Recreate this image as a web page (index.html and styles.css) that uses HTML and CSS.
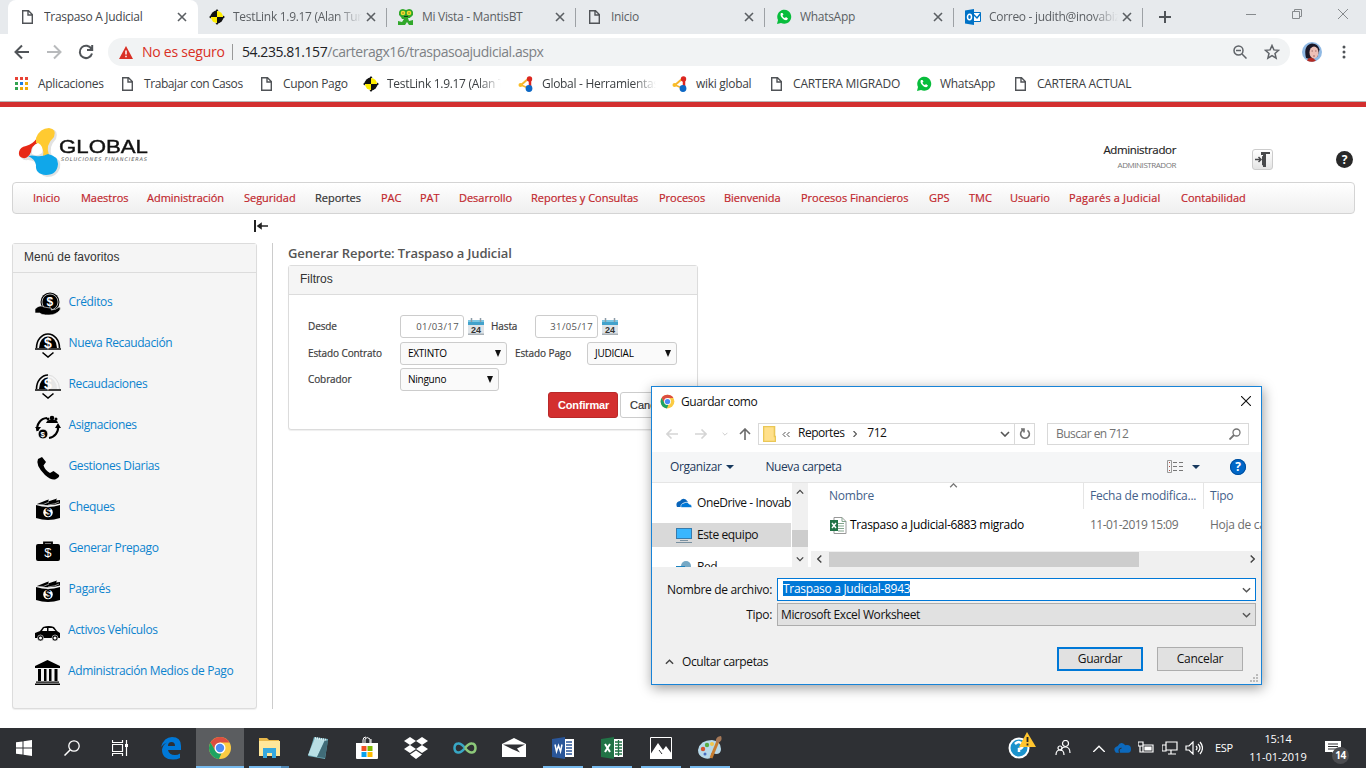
FILE: index.html
```html
<!DOCTYPE html>
<html lang="es">
<head>
<meta charset="utf-8">
<title>Traspaso A Judicial</title>
<link rel="stylesheet" href="styles.css">
</head>
<body>
<svg class="defs" aria-hidden="true">
  <symbol id="doc" viewBox="0 0 14 16"><path d="M2.7 1.7h5.8l3.8 3.8v8.8H2.7z M8 1.7v4.3h4.3" fill="none" stroke="#505357" stroke-width="1.4"/></symbol>
  <symbol id="x" viewBox="0 0 10 10"><path d="M1 1l8 8M9 1L1 9" stroke="#5b5f63" stroke-width="1.6"/></symbol>
  <symbol id="testlink" viewBox="0 0 16 16"><path d="M8 8V1.500A6.500 6.500 0 0 0 1.500 8z" fill="#111"/><path d="M8 8V2a6 6 0 0 1 6 6z" fill="#fe0"/><path d="M8 8v6a6 6 0 0 1-6-6z" fill="#fe0"/><path d="M8 8v6.500A6.500 6.500 0 0 0 14.500 8z" fill="#111"/><path d="M0 8l2-1.500v3zM16 8l-2-1.500v3zM8 0L6.500 2h3zM8 16l-1.500-2h3z" fill="#111"/></symbol>
  <symbol id="wa" viewBox="0 0 16 16"><path d="M1 15l1-4a7 7 0 1 1 3 3z" fill="#08bd3c"/><path d="M5 4c-2 3 3 8 6 7l1-1.5L10 8 9 9C8 9 6.500 7.500 6.500 6.500l1-1L6.500 4z" fill="#fff"/></symbol>
  <symbol id="global" viewBox="0 0 16 16"><path d="M10 3L3 9" stroke="#f6b42c" stroke-width="2"/><path d="M3 9l7 3" stroke="#f6b42c" stroke-width="1.500"/><circle cx="11.500" cy="3" r="2.700" fill="#dc2720"/><path d="M12 3v7" stroke="#dc2720" stroke-width="2.500"/><circle cx="2.500" cy="9" r="2" fill="#f9bd27"/><circle cx="11" cy="12.500" r="3.400" fill="#0d68c5"/></symbol>
  <symbol id="chrome" viewBox="0 0 24 24"><circle cx="12" cy="12" r="11" fill="#fbcb43"/><path d="M2.500 6.500A11 11 0 0 1 21.500 6.500H12L7.200 14.800z" fill="#dc4e41"/><path d="M2.500 6.500l4.800 8.300A5.500 5.500 0 0 0 13.500 17.300L11 23A11 11 0 0 1 2.500 6.500z" fill="#1ea362"/><circle cx="12" cy="12" r="5.500" fill="#fff"/><circle cx="12" cy="12" r="4.200" fill="#4c8bf5"/></symbol>
  <symbol id="cal" viewBox="0 0 16 18"><path d="M0 5h16v12H0z" fill="#dfe4e8"/><path d="M0 15.500h16V17H0z" fill="#a8b0b6"/><path d="M0 2h16v5H0z" fill="#42a2cc"/><path d="M0 2h16v2H0z" fill="#7dc7e3"/><path d="M3.500 0v4M12.500 0v4" stroke="#8b9ba6" stroke-width="1.500"/><text x="3" y="15" class="cal-num">24</text></symbol>
  <symbol id="cash" viewBox="0 0 26 26"><path d="M1 9q12 4 24 0v13q-12 4-24 0z"/><path d="M2 8l10-4 2-.5-1 2 9-3-1 2 4-.5v3.500q-8 3-23 1z"/><path d="M2 8.500q7 1 12-2.500M13 9q8-1 11-3" stroke="#f5f5f5" stroke-width=".6" fill="none"/><circle cx="13" cy="16.500" r="4.800" fill="#fff"/><text x="10.300" y="20.100" class="coin dark">$</text></symbol>
  <symbol id="down" viewBox="0 0 10 6"><path d="M1 1l4 4 4-4" fill="none" stroke="currentColor" stroke-width="1.600"/></symbol>
</svg>

<header class="tabs">
  <div class="tab active"><svg class="i-doc"><use href="#doc"/></svg><span>Traspaso A Judicial</span><svg class="i-x"><use href="#x"/></svg></div>
  <div class="tab"><svg class="i-fav"><use href="#testlink"/></svg><span class="fade">TestLink 1.9.17 (Alan Turing)</span><svg class="i-x"><use href="#x"/></svg></div>
  <div class="tab"><svg class="i-fav" viewBox="0 0 16 16"><path d="M2 6h12l-2 3h-2l1 3 4-1v5h-4l-2-3-2 3H0v-4l4 1 2-3H4z" fill="#31a82b"/><path d="M1 3q1-3 4-3l3 1 3-1q3 0 4 3v3l-2 2H3L1 6z" fill="#31a82b"/><circle cx="5" cy="4" r="2.300" fill="#f3db2f"/><circle cx="11" cy="4" r="2.300" fill="#f3db2f"/><path d="M4.500 4h1M10.500 4h1M6 7.500h4" stroke="#173d12"/></svg><span>Mi Vista - MantisBT</span><svg class="i-x"><use href="#x"/></svg></div>
  <div class="tab"><svg class="i-doc"><use href="#doc"/></svg><span>Inicio</span><svg class="i-x"><use href="#x"/></svg></div>
  <div class="tab"><svg class="i-fav"><use href="#wa"/></svg><span>WhatsApp</span><svg class="i-x"><use href="#x"/></svg></div>
  <div class="tab"><svg class="i-fav" viewBox="0 0 16 16"><path d="M7 3.500h8.500v9H7z" fill="#fff" stroke="#0072c6"/><path d="M8 5l4 4 4-5" fill="none" stroke="#0072c6" stroke-width="1.500"/><path d="M0 1.500L9 0v16l-9-1.500z" fill="#0072c6"/><ellipse cx="4.500" cy="8" rx="2" ry="2.700" fill="none" stroke="#fff" stroke-width="1.500"/></svg><span class="fade">Correo - judith@inovabiz</span><svg class="i-x"><use href="#x"/></svg></div>
  <svg class="i-plus" viewBox="0 0 12 12"><path d="M6 0v12M0 6h12" stroke="#505458" stroke-width="2"/></svg>
  <div class="win"><svg viewBox="0 0 10 10"><path d="M0 5.500h10"/></svg><svg viewBox="0 0 10 10"><path d="M.5 2.500h7v7h-7zM2.500 2.500v-2h7v7h-2"/></svg><svg viewBox="0 0 10 10"><path d="M0 0l10 10M10 0L0 10"/></svg></div>
</header>

<div class="toolbar">
  <div class="nav-btns">
    <svg viewBox="0 0 16 16"><path d="M15 8H2M8 1.500L1.500 8 8 14.500" stroke="#505458"/></svg>
    <svg viewBox="0 0 16 16"><path d="M1 8h13M8 1.500L14.500 8 8 14.500" stroke="#b8babc"/></svg>
    <svg viewBox="0 0 16 16"><path d="M13.500 5A6.200 6.200 0 1 0 14 9.500M14.200 1v5H9" stroke="#505458"/></svg>
  </div>
  <div class="omnibox">
    <svg class="i-warn" viewBox="0 0 14 13"><path d="M7 0l7 13H0z" fill="#d93025"/><path d="M7 4.500v4M7 9.800v1.500" stroke="#fff" stroke-width="1.500"/></svg>
    <span class="unsafe">No es seguro</span><i></i><span class="url"><b>54.235.81.157</b>/carteragx16/traspasoajudicial.aspx</span>
    <svg class="i-zoom" viewBox="0 0 14 14"><circle cx="5.500" cy="5.500" r="4.500"/><path d="M3 5.500h5M9 9l4.500 4.500"/></svg>
    <svg class="i-star" viewBox="0 0 16 16"><path d="M8 1.500l1.900 4.400 4.700.4-3.600 3.100 1.100 4.700L8 11.600l-4.100 2.500L5 9.400 1.400 6.300l4.700-.4z"/></svg>
  </div>
  <svg class="avatar" viewBox="0 0 20 20"><circle cx="10" cy="10" r="10" fill="#90b9e4"/><path d="M4 16Q1 3 10 1.500q6 0 7.500 6l-2 7-6 3z" fill="#1b1827"/><path d="M5 18.500q1-3 5-3l4 3-2 1q-4 1-7-1z" fill="#b52b22"/><ellipse cx="12" cy="10.500" rx="4.500" ry="6" fill="#eec0b6"/><path d="M9.500 9h1.500M13 9h1.500M11 14h2" stroke="#8d5557" stroke-width=".8"/></svg>
  <svg class="dots" viewBox="0 0 4 14"><circle cx="2" cy="2" r="1.500"/><circle cx="2" cy="7" r="1.500"/><circle cx="2" cy="12" r="1.500"/></svg>
</div>

<div class="bookmarks">
  <span><svg class="i-apps" viewBox="0 0 13 13"><path d="M0 0h3v3H0zM5 0h3v3H5zM10 0h3v3h-3z" fill="#e84235"/><path d="M0 5h3v3H0zM0 10h3v3H0z" fill="#32a350"/><path d="M5 5h3v3H5z" fill="#1b7ee6"/><path d="M10 5h3v3h-3zM5 10h3v3H5zM10 10h3v3h-3z" fill="#efab09"/></svg><em>Aplicaciones</em></span>
  <span><svg class="i-doc"><use href="#doc"/></svg><em class="tight">Trabajar con Casos</em></span>
  <span><svg class="i-doc"><use href="#doc"/></svg><em>Cupon Pago</em></span>
  <span><svg class="i-fav"><use href="#testlink"/></svg><em class="fade">TestLink 1.9.17 (Alan Turing)</em></span>
  <span><svg class="i-fav"><use href="#global"/></svg><em class="fade">Global - Herramientas</em></span>
  <span><svg class="i-fav"><use href="#global"/></svg><em>wiki global</em></span>
  <span><svg class="i-doc"><use href="#doc"/></svg><em class="loose">CARTERA MIGRADO</em></span>
  <span><svg class="i-fav"><use href="#wa"/></svg><em>WhatsApp</em></span>
  <span><svg class="i-doc"><use href="#doc"/></svg><em>CARTERA ACTUAL</em></span>
</div>

<main class="page">
  <div class="brand">
    <svg class="logo" viewBox="0 0 44 50"><path d="M22 10Q24 2 33 1q8 1 5 10-8 8-4 17 10 3 8 12-3 9-13 9-9-2-9-11-3-6-10-6-8 1-7-6z" fill="#e2e2e2"/><path d="M19 10l1 5Q13 18 13 24 10 31 5 30 0 29 1 24q1-5 7-6 7-2 11-8z" fill="#e72816"/><path d="M18 10Q22 0 31 0q8 1 5 9-9 8-5 18l-6 1q2-9-7-13z" fill="#ffca31"/><path d="M10 28q4-1 8 0 6 1 12-2 10 2 10 10-1 11-12 11-11-1-10-10-1-6-8-9z" fill="#10a7ea"/><path d="M20 15q6 3 4 10-5 4-10 1-1-8 6-11z" fill="#fff"/></svg>
    <div class="brand-text"><strong>GLOBAL</strong><small>SOLUCIONES FINANCIERAS</small></div>
    <div class="user"><b>Administrador</b><small>ADMINISTRADOR</small></div>
    <div class="exit"><svg viewBox="0 0 17 17"><path d="M7 1h9v2h-4v13H9V4H7z" fill="#48494b"/><path d="M8 5l4 1v10l-4-2z" fill="#48494b"/><path d="M1 8.500h6M4.500 6L7 8.500 4.500 11" fill="none" stroke="#48494b" stroke-width="1.500"/></svg></div>
    <div class="help">?</div>
  </div>

  <nav class="menu"><a>Inicio</a><a>Maestros</a><a>Administración</a><a>Seguridad</a><a class="on">Reportes</a><a>PAC</a><a>PAT</a><a>Desarrollo</a><a>Reportes y Consultas</a><a>Procesos</a><a>Bienvenida</a><a>Procesos Financieros</a><a>GPS</a><a>TMC</a><a>Usuario</a><a class="wide">Pagarés a Judicial</a><a>Contabilidad</a></nav>

  <div class="collapse"><svg viewBox="0 0 14 12"><path d="M1 0v12" stroke="#222" stroke-width="2"/><path d="M4 6h10M7 3.800v4.400L4 6z" stroke="#222" stroke-width="1.600" fill="#222"/></svg></div>

  <div class="columns">
    <aside class="favs">
      <h2>Menú de favoritos</h2>
      <ul>
        <li><svg viewBox="0 0 26 26"><circle cx="15" cy="11" r="9.500"/><circle cx="15" cy="11" r="8" fill="none" stroke="#fff" stroke-width=".700"/><text x="11.500" y="15" class="coin">$</text><path d="M0 18q5-5 9-2l6 1q3 0 1 2 5 0 8-3 2 0 1 3-4 5-11 5-8 0-9-2H0z" stroke="#f5f5f5" stroke-width=".600"/></svg><a>Créditos</a></li>
        <li><svg viewBox="0 0 26 26"><path d="M1.500 16a11.500 14 0 0 1 23 0" fill="none" stroke="#000" stroke-width="1.600"/><path d="M4 16a9 11.500 0 0 1 18 0z"/><path d="M0 17h26M7.500 20.500l5.500 4.500 5.500-4.500" fill="none" stroke="#000" stroke-width="1.600"/><text x="9" y="15.500" class="coin big">$</text></svg><a>Nueva Recaudación</a></li>
        <li><svg viewBox="0 0 26 26"><path d="M13 2a12 14 0 0 1 11.500 14" fill="none" stroke="#ddd"/><path d="M13 4.500a9 11 0 0 1 9 11.500h-9z" fill="#e6e6e6"/><path d="M1.500 16A11.500 14 0 0 1 13 2" fill="none" stroke="#000" stroke-width="1.600"/><path d="M4 16a9 11.500 0 0 1 9-11.500V16z"/><path d="M0 17h26M7.500 20.500l5.500 4.500 5.500-4.500" fill="none" stroke="#000" stroke-width="1.600"/><text x="9" y="15.500" class="coin big">$</text></svg><a>Recaudaciones</a></li>
        <li><svg viewBox="0 0 26 26"><path d="M2.500 17A10.500 10.500 0 0 1 12 4M23 12a10.500 10.500 0 0 1-9 12" fill="none" stroke="#000" stroke-width="2.200"/><path d="M0 13l3 4 3-4zM20 14l3-5 3 5zM11 9q2-4 6-3 5-1 6 3z"/><circle cx="17" cy="4" r="2.300"/><circle cx="13" cy="5" r="1.500"/><circle cx="21" cy="5" r="1.500"/><circle cx="8" cy="20" r="5" stroke="#f5f5f5"/><text x="5.600" y="23.300" class="coin small">$</text></svg><a>Asignaciones</a></li>
        <li><svg viewBox="0 0 26 26"><path d="M3 4l4-2 4 5-2.500 3.500Q10 15 15 18l3.500-2L24 20q1 2-3 4-4 2-11-4Q0 10 3 4z"/></svg><a>Gestiones Diarias</a></li>
        <li><svg viewBox="0 0 26 26"><use href="#cash"/></svg><a>Cheques</a></li>
        <li><svg viewBox="0 0 26 26"><rect x="1" y="7" width="24" height="17" rx="2"/><path d="M9 7V5.500h8V7" fill="none" stroke="#000" stroke-width="1.800"/><text x="9.300" y="20" class="coin thin">$</text></svg><a>Generar Prepago</a></li>
        <li><svg viewBox="0 0 26 26"><use href="#cash"/></svg><a>Pagarés</a></li>
        <li class="l2"><svg viewBox="0 0 26 26"><path d="M0 19v-5l5-2 3-4q6-2 11 0l3 4 3 2v5z"/><path d="M7 12l2-3h3v3zM13.500 12V9h4l3 3z" fill="#f5f5f5"/><circle cx="5.500" cy="19" r="3" stroke="#f5f5f5" stroke-width=".6"/><circle cx="20" cy="19" r="3" stroke="#f5f5f5" stroke-width=".6"/><circle cx="5.500" cy="19" r="1.500" fill="#fff"/><circle cx="20" cy="19" r="1.500" fill="#fff"/></svg><a>Activos Vehículos</a></li>
        <li class="l2"><svg viewBox="0 0 26 26"><path d="M0 6l12.500-6L25 6v2H0zM3 9h3v12H3zM9 9h2.500v12H9zM14 9h2.500v12H14zM19.500 9h3v12h-3zM1 21.500h23v1.200H1zM0 23.500h25V25H0z"/></svg><a>Administración Medios de Pago</a></li>
      </ul>
    </aside>
    <section class="report">
      <h1>Generar Reporte: Traspaso a Judicial</h1>
      <div class="panel">
        <h2>Filtros</h2>
        <div class="filters">
          <div class="row r1"><label>Desde</label><span class="input">01/03/17</span><svg><use href="#cal"/></svg><label>Hasta</label><span class="input">31/05/17</span><svg><use href="#cal"/></svg></div>
          <div class="row r2"><label>Estado Contrato</label><span class="select">EXTINTO<i></i></span><label>Estado Pago</label><span class="select">JUDICIAL<i></i></span></div>
          <div class="row r3"><label>Cobrador</label><span class="select">Ninguno<i></i></span></div>
          <div class="actions"><span class="btn primary">Confirmar</span><span class="btn">Cancelar</span></div>
        </div>
      </div>
    </section>
  </div>
</main>

<footer class="taskbar">
  <div class="apps">
    <div class="app sys"><svg class="s16" viewBox="0 0 16 16"><path d="M0 2.300L6.500 1.400V7.500H0zM7.500 1.200L16 0v7.500H7.500zM0 8.500h6.500v6.100L0 13.700zM7.500 8.500H16V16l-8.500-1.200z" fill="#fff"/></svg></div>
    <div class="app sys"><svg class="s16" viewBox="0 0 16 16"><circle cx="10" cy="6" r="5.200" fill="none" stroke="#fff" stroke-width="1.300"/><path d="M6.300 9.700L.500 15.500" stroke="#fff" stroke-width="1.500"/></svg></div>
    <div class="app sys"><svg class="s16" viewBox="0 0 16 16"><path d="M.5 0v2.500h10V0M.5 16v-2.500h10V16M.5 4.500h10v7H.5zM14.500 0v16" fill="none" stroke="#fff" stroke-width="1.200"/><path d="M13 4h3v3h-3z" fill="#fff"/></svg></div>
    <div class="app"><svg viewBox="0 0 24 24"><path d="M2 11Q5 1 13 1q9 0 9 9v4H9q1 5 7 5 3 0 5-1.500V22q-3 1.500-7 1.500-11 0-11-10 1-5 5-7Q5 7 2 11zm7-1h7q0-4-3.500-4T9 10z" fill="#0078d7"/></svg></div>
    <div class="app current"><svg><use href="#chrome"/></svg></div>
    <div class="app open group"><svg viewBox="0 0 24 24"><path d="M2 2h8l2 2h10v16H2z" fill="#e8b84b"/><path d="M2 5h21v15H2z" fill="#ffe79a"/><path d="M6 12h13v10h-4v-5h-5v5H6z" fill="#35a8df"/></svg></div>
    <div class="app"><svg viewBox="0 0 24 24"><path d="M8 1l14 2-3 20-17-3z" fill="#6cabb9"/><path d="M9 2l10 2-8 17-9-2z" fill="#b8dfe5"/><path d="M19 4l3 1-3 17-8-1z" fill="#416c78"/><path d="M9 2l12 2" stroke="#e6f3f4" stroke-width="2" stroke-dasharray="1 1"/></svg></div>
    <div class="app"><svg viewBox="0 0 24 24"><path d="M1 7h22v15q0 1-1 1H2q-1 0-1-1z" fill="#fff"/><path d="M8 7V4q0-3 3-3M10 7V3q2-3 5 0v4M16 7V3" fill="none" stroke="#fff"/><path d="M6.500 10h5v5h-5z" fill="#f04f23"/><path d="M12.500 10h5v5h-5z" fill="#7db801"/><path d="M6.500 16h5v5h-5z" fill="#0aa2ec"/><path d="M12.500 16h5v5h-5z" fill="#fdb900"/></svg></div>
    <div class="app"><svg viewBox="0 0 24 24"><path d="M6 1L0 5l6 4 6-4zm12 0l-6 4 6 4 6-4zM0 13l6 4 6-4-6-4zm18-4l-6 4 6 4 6-4zM6 18.500l6-4 6 4-6 4.500z" fill="#fff"/></svg></div>
    <div class="app"><svg viewBox="0 0 24 24"><path d="M12 12Q8 7 5 7.500q-3.500.5-3.500 4.500T5 16.500Q8 17 12 12" fill="none" stroke="#38a7c5" stroke-width="2.500"/><path d="M12 12q4-5 7-4.500 3.500.5 3.500 4.500T19 16.500q-3 .5-7-4.500" fill="none" stroke="#8dc97a" stroke-width="2.500"/></svg></div>
    <div class="app"><svg viewBox="0 0 24 24"><path d="M0 8l12-6 12 6v13H0z" fill="#fff"/><path d="M1 8.500h22l-8 4 3 4-7-3z" fill="#2f3034"/></svg></div>
    <div class="app open"><svg viewBox="0 0 24 24"><path d="M12 3h11v18H12z" fill="#fff"/><path d="M15 6h6M15 9h6M15 12h6M15 15h6M15 18h6" stroke="#2a5699" stroke-width="1.300"/><path d="M1 3l13-2v22L1 21z" fill="#2a5699"/><path d="M4 8.500l1.500 7 2-6 2 6 1.500-7" fill="none" stroke="#fff" stroke-width="1.500"/></svg></div>
    <div class="app open"><svg viewBox="0 0 24 24"><path d="M12 3h11v18H12z" fill="#fff"/><path d="M15 6h7M15 9h7M15 12h7M15 15h7M15 18h7M18.500 4v16" stroke="#217346" stroke-width="1.300"/><path d="M1 3l13-2v22L1 21z" fill="#217346"/><path d="M5 8l5 8M10 8l-5 8" stroke="#fff" stroke-width="2"/></svg></div>
    <div class="app open"><svg viewBox="0 0 24 24"><path d="M1.500 1.500h21v21h-21z" fill="#2b2c30" stroke="#fff"/><path d="M1 19L9 7l5 7 3-4 6 8v5H1z" fill="#fff"/><path d="M10 14l3 4" stroke="#2b2c30"/></svg></div>
    <div class="app open"><svg viewBox="0 0 24 24"><path d="M0 14Q2 4 14 4q9 1 9 9 0 5-5 5l-4-1q-2 1 0 4-3 3-8 1-6-2-6-8z" fill="#b7d9ea"/><circle cx="5" cy="13" r="2.200" fill="#d7522d"/><circle cx="9" cy="9" r="2.200" fill="#58ac45"/><circle cx="14" cy="8" r="2" fill="#f0c64b"/><circle cx="7" cy="18" r="1.500" fill="#496fc1"/><path d="M13 22l7-17" stroke="#c77d30" stroke-width="3"/><path d="M18 6q-1-5 5-6 2 5-3 7z" fill="#a67857"/></svg></div>
  </div>
  <div class="tray">
    <svg class="t-alert" viewBox="0 0 28 28"><circle cx="11" cy="16" r="10.500" fill="#fff"/><circle cx="11" cy="16" r="8.500" fill="#1c93cc"/><path d="M7 12q4-4 7 0 2 4-3 5v3" fill="none" stroke="#fff" stroke-width="2.500"/><path d="M19 0l9 15H11z" fill="#ffc52e"/><path d="M19.500 5v5M19.500 11.500v2" stroke="#222" stroke-width="1.800"/></svg>
    <svg class="t-people" viewBox="0 0 16 16"><circle cx="10.500" cy="3.500" r="3"/><path d="M6 11q0-4 4.500-4t4.500 6M1 15q0-5 4-5t4 5"/><circle cx="5" cy="8" r="2"/></svg>
    <svg class="t-up" viewBox="0 0 10 6"><path d="M0 6l5-5 5 5"/></svg>
    <svg class="t-cloud" viewBox="0 0 18 12"><path d="M2 11q-4-5 2-7 3-6 8-1 6-1 6 4 0 4-3 4z" fill="#0c69bd"/><path d="M6 11q-2-4 2-5" stroke="#2e3034" fill="none"/></svg>
    <svg class="t-bat" viewBox="0 0 16 14"><path d="M5 4h10v7H5zM0 1h5v4H0zM2 5v6h3"/><path d="M7 6h6v3H7z" fill="#fff"/></svg>
    <svg class="t-net" viewBox="0 0 16 14"><path d="M4 1h11v8H4zM9 9v4M6 13h8M0 4h4v6H0z"/></svg>
    <svg class="t-vol" viewBox="0 0 18 14"><path d="M1 5h3l4-4v12L4 9H1zM11 5q2 2 0 4M13 3q4 4 0 8M15 1q5 6 0 12"/></svg>
    <span class="lang">ESP</span>
    <span class="clock"><span>15:14</span><span>11-01-2019</span></span>
    <div class="notice"><svg viewBox="0 0 16 16"><path d="M0 1h16v11h-5v4l-4-4H0z" fill="#fff"/><path d="M3 4h10M3 6.500h10M3 9h10" stroke="#2e2f32"/></svg><b>14</b></div>
  </div>
</footer>

<div class="dialog">
  <div class="d-title"><svg class="i-chrome"><use href="#chrome"/></svg><span>Guardar como</span><svg class="d-close" viewBox="0 0 10 10"><path d="M0 0l10 10M10 0L0 10" stroke="#111" stroke-width="1.100"/></svg></div>
  <div class="d-nav">
    <svg class="ar" viewBox="0 0 12 10"><path d="M12 5H1M5.500 .5L1 5l4.500 4.500" stroke="#d5d5d5"/></svg>
    <svg class="ar" viewBox="0 0 12 10"><path d="M0 5h11M6.500 .5L11 5 6.500 9.500" stroke="#d5d5d5"/></svg>
    <svg class="tiny"><use href="#down"/></svg>
    <svg class="up" viewBox="0 0 12 12"><path d="M6 12V1M1 6l5-5 5 5" stroke="#6a6a6a"/></svg>
    <div class="address"><svg class="folder" viewBox="0 0 13 16"><path d="M0 0h12v10h1v6H0z" fill="#ffe08b"/><path d="M.5 .5h11v10h1v5H.5z" fill="none" stroke="#eac756"/></svg><svg class="laq" viewBox="0 0 8 5"><path d="M3.500 0L1 2.500 3.500 5M7.500 0L5 2.500 7.500 5"/></svg><span>Reportes</span><svg class="raq" viewBox="0 0 4 6"><path d="M.5 0l3 3-3 3"/></svg><span>712</span><svg class="chev"><use href="#down"/></svg><div class="refresh"><svg viewBox="0 0 12 12"><path d="M4 2A4.400 4.400 0 1 0 8.500 2.300M2 1h3v3.500" fill="none" stroke="#707070" stroke-width="1.600"/></svg></div></div>
    <div class="search"><span>Buscar en 712</span><svg viewBox="0 0 12 12"><circle cx="7.500" cy="4.500" r="3.500" fill="none" stroke="#737373" stroke-width="1.300"/><path d="M5 7L.5 11.500" stroke="#737373" stroke-width="1.800"/></svg></div>
  </div>
  <div class="d-tools"><span>Organizar</span><i class="tri"></i><span class="new">Nueva carpeta</span><svg class="views" viewBox="0 0 16 13"><path d="M.5 .5h4v12h-4z" fill="none" stroke="#999"/><path d="M2 2.500h1M2 6.500h1M2 10.500h1" stroke="#b24d40"/><path d="M6 2.500h4M12 2.500h4M6 6.500h4M12 6.500h4M6 10.500h4M12 10.500h4" stroke="#777"/></svg><i class="tri"></i><b class="d-help">?</b></div>
  <div class="d-body">
    <div class="tree">
      <div><svg class="t16" viewBox="0 0 16 10"><path d="M1 9q-2-5 3-6 4-5 8 1l-5 1-2 4z" fill="#0864ba"/><path d="M5 9.500Q4 6 8 5q4-2 5 1 3 0 3 3.500z" fill="#0078d7" stroke="#fff" stroke-width=".6"/></svg><span>OneDrive - Inovabiz</span></div>
      <div class="sel"><svg class="t16 pc" viewBox="0 0 16 15"><path d="M0 0h16v11H0z" fill="#377bac"/><path d="M1 1h14v9H1z" fill="#38b6ff"/><path d="M4 12.500h8M0 14.500h16" stroke="#7990a0"/></svg><span>Este equipo</span></div>
      <div class="net"><svg class="t16" viewBox="0 0 16 12"><circle cx="10" cy="5" r="5" fill="#75a8c5"/><path d="M0 5h9v6H0z" fill="#1b82bf"/></svg><span>Red</span></div>
    </div>
    <div class="vscroll"><svg class="flip"><use href="#down"/></svg><i></i><svg><use href="#down"/></svg></div>
    <div class="files">
      <svg class="sort"><use href="#down"/></svg>
      <div class="f-head"><span>Nombre</span><span>Fecha de modifica...</span><span>Tipo</span></div>
      <div class="f-row"><svg viewBox="0 0 17 17"><path d="M4 .5h8l4 4v12H4z" fill="#fff" stroke="#999"/><path d="M12 .5v4h4M8 6.500h6M8 9h6M8 11.500h6M8 14h6" fill="none" stroke="#83a58c"/><path d="M0 3h8v11H0z" fill="#217346"/><path d="M2 6l4 5M6 6l-4 5" stroke="#fff" stroke-width="1.400"/></svg><span>Traspaso a Judicial-6883 migrado</span><span>11-01-2019 15:09</span><span>Hoja de cálculo</span></div>
      <div class="hscroll"><svg class="left"><use href="#down"/></svg><i></i><svg class="right"><use href="#down"/></svg></div>
    </div>
  </div>
  <div class="d-fields">
    <label>Nombre de archivo:</label><div class="combo focus"><mark>Traspaso a Judicial-8943</mark><svg><use href="#down"/></svg></div>
    <label>Tipo:</label><div class="combo"><span>Microsoft Excel Worksheet</span><svg><use href="#down"/></svg></div>
  </div>
  <div class="d-foot"><svg class="flip"><use href="#down"/></svg><span>Ocultar carpetas</span><b class="save">Guardar</b><b>Cancelar</b></div>
  <svg class="grip" viewBox="0 0 8 8"><path d="M6 0h2v2H6zM3 3h2v2H3zM6 3h2v2H6zM0 6h2v2H0zM3 6h2v2H3zM6 6h2v2H6z" fill="#bbb"/></svg>
</div>
</body>
</html>
```
FILE: styles.css
```css
* { box-sizing: border-box; }
body { margin: 0; width: 1366px; height: 768px; overflow: hidden; display: flex; flex-direction: column; position: relative; background: #fff; font: 12px/16px "Open Sans", sans-serif; letter-spacing: -.3px; color: #222; white-space: nowrap; }
.defs { position: absolute; width: 0; height: 0; }
svg { flex: none; display: block; }
h1, h2, ul { margin: 0; padding: 0; }
em, i { font-style: normal; }

/* Browser tabs */
.tabs { flex: none; height: 34px; background: #e7eaed; display: flex; padding-left: 8px; color: #5b5f63; }
.tab { width: 189px; height: 34px; display: flex; align-items: center; padding: 0 11px; background: linear-gradient(#9da1a5, #9da1a5) right 8px / 1px 19px no-repeat; }
.tab.active { width: 190px; padding-left: 12px; background: #fff; border-radius: 8px 8px 0 0; color: #44474b; }
.tab.active + .tab { background: none; }
.tab.active + .tab { background: linear-gradient(#9da1a5, #9da1a5) right 8px / 1px 19px no-repeat; }
.tab span { flex: 1; margin-left: 8px; overflow: hidden; }
.i-doc { width: 14px; height: 16px; }
.tab .i-doc { margin-right: 2px; }
.i-fav { width: 16px; height: 16px; }
.i-x { width: 10px; height: 10px; margin-left: 4px; }
.fade { overflow: hidden; -webkit-mask: linear-gradient(90deg, #000 80%, transparent); mask: linear-gradient(90deg, #000 80%, transparent); }
.i-plus { width: 12px; height: 12px; margin: 11px 0 0 16px; }
.win { display: flex; gap: 36px; margin: 9px 0 0 75px; }
.win svg { width: 10px; height: 10px; fill: none; stroke: #868a8d; }

/* Address bar */
.toolbar { flex: none; height: 36px; display: flex; align-items: center; padding-left: 14px; }
.nav-btns { display: flex; gap: 16px; width: 94px; }
.nav-btns svg { width: 16px; height: 16px; fill: none; stroke-width: 2; }
.omnibox { width: 1182px; height: 28px; background: #f1f3f4; border-radius: 14px; display: flex; align-items: center; padding-left: 11px; font-size: 14px; letter-spacing: -.25px; }
.i-warn { width: 14px; height: 13px; }
.unsafe { width: 90px; margin-left: 9px; color: #d93025; }
.omnibox i { width: 1px; height: 16px; background: #999; }
.url { margin-left: 9px; width: 991px; color: #7d8185; letter-spacing: -.45px; }
.url b { font-weight: 400; color: #202124; }
.i-zoom { width: 14px; height: 14px; fill: none; stroke: #5f6368; stroke-width: 1.500; }
.i-star { width: 16px; height: 16px; margin-left: 17px; fill: none; stroke: #5f6368; stroke-width: 1.500; }
.avatar { width: 20px; height: 20px; margin-left: 12px; }
.dots { width: 4px; height: 14px; margin-left: 20px; fill: #505458; }

/* Bookmarks */
.bookmarks { flex: none; height: 32px; display: grid; grid-template-columns: 106px 139px 103px 155px 154px 98px 146px 98px 140px; padding: 0 0 4px 15px; border-bottom: 1px solid #b8b8b8; color: #3c4043; }
.bookmarks span { display: flex; align-items: center; }
.bookmarks em { margin-left: 8px; max-width: 114px; }
.bookmarks .i-doc { margin-left: -1px; }
.bookmarks .i-doc + em { margin-left: 10px; }
.bookmarks .tight { letter-spacing: -.42px; }
.bookmarks .loose { letter-spacing: -.18px; }
.i-apps { width: 13px; height: 13px; }
.bookmarks .i-apps + em { margin-left: 10px; }

/* Application page */
.page { flex: 1; border-top: 5px solid #d32f2f; padding: 0 11px 0 12px; }
.brand { height: 75px; display: flex; padding-left: 6px; }
.logo { width: 44px; height: 50px; margin-top: 21px; }
.brand-text { margin: 31px 0 0 -3px; width: 1024px; }
.brand-text strong { display: block; font: 400 19px/17px "Liberation Sans", sans-serif; letter-spacing: 0; color: #111; transform: scaleX(1.170); transform-origin: left; -webkit-text-stroke: .4px #111; }
.brand-text small { display: block; font: italic 5px/6px "DejaVu Sans", sans-serif; letter-spacing: .88px; color: #555; padding-left: 2px; margin-top: 1px; }
.user { width: 93px; margin-top: 34px; text-align: right; line-height: 18px; }
.user b { display: block; font-weight: 400; font-size: 11.500px; letter-spacing: -.35px; -webkit-text-stroke: .15px; }
.user small { display: block; font-size: 8px; line-height: 12px; color: #777; letter-spacing: -.45px; }
.exit { width: 21px; height: 21px; margin: 42px 0 0 76px; border: 1px solid #ccc; border-radius: 3px; background: linear-gradient(#fff, #e4e4e4); padding: 1px; }
.exit svg { width: 17px; height: 17px; }
.help { width: 17px; height: 17px; margin: 44px 0 0 63px; border-radius: 50%; background: #292929; color: #fff; text-align: center; font: bold 12px/17px "Open Sans", sans-serif; }
.menu { height: 32px; border: 1px solid #d4d4d4; border-radius: 4px; background: linear-gradient(#fff, #efefef); display: grid; grid-template-columns: 48px 66px 97px 71px 66px 39px 39px 72px 128px 65px 77px 128px 40px 41px 59px 112px auto; padding-left: 20px; color: #c1272d; font-size: 11px; line-height: 30px; letter-spacing: -.02px; -webkit-text-stroke: .2px; }
.menu .on { color: #333; }
.menu .wide { letter-spacing: .15px; }
.collapse { height: 29px; padding: 6px 0 0 242px; }
.collapse svg { width: 14px; height: 12px; }
.columns { display: flex; }
.favs { width: 245px; height: 466px; border: 1px solid #dcdcdc; border-radius: 3px; background: #f5f5f5; box-shadow: 0 1px 1px #0001; }
.favs h2, .panel h2 { font: 400 12px/27px "Liberation Sans", sans-serif; letter-spacing: 0; height: 29px; padding-left: 11px; color: #333; border-bottom: 1px solid #dcdcdc; background: #f5f5f5; }
.favs ul { list-style: none; padding: 17px 0 0 22px; }
.favs li { height: 41px; display: flex; }
.favs li svg { width: 26px; height: 26px; margin-top: 1px; }
.favs a { color: #0c83ce; margin-left: 7.500px; line-height: 24px; letter-spacing: -.38px; }
.favs .l2 a { margin-left: 7px; }
.coin { fill: #fff; font: bold 12px "Liberation Sans", sans-serif; }
.coin.dark { fill: #000; font-size: 10px; }
.coin.big { font-size: 14px; }
.coin.small { font-size: 8px; }
.coin.thin { font-weight: 400; font-size: 13px; }
.cal-num { font: bold 9px "Liberation Sans", sans-serif; fill: #333; letter-spacing: 0; }
.report { width: 426px; height: 466px; margin-left: 15px; padding-left: 15px; border-left: 1px solid #ccc; }
.report h1 { font: 600 13px/21px "Open Sans", sans-serif; letter-spacing: -.12px; height: 22px; color: #555; }
.panel { width: 410px; height: 165px; border: 1px solid #dcdcdc; border-radius: 3px; background: #fff; box-shadow: 0 1px 1px #0001; }
.filters { padding: 18px 0 0 19px; font-size: 10px; line-height: 23px; color: #3d3d3d; letter-spacing: -.1px; }
.row { display: grid; align-items: center; height: 26px; }
.r1 { grid-template-columns: 92px 68px 23px 44px 67px 16px; height: 27px; }
.r2 { grid-template-columns: 92px 115px 72px 90px; }
.r3 { grid-template-columns: 92px 99px; height: 27px; }
.row label { -webkit-text-stroke: .2px; }
.row svg { width: 16px; height: 18px; }
.input { width: 64px; height: 23px; border: 1px solid #ccc; border-radius: 3px; text-align: right; padding-right: 4px; line-height: 21px; color: #555; font-size: 9.500px; letter-spacing: .4px; }
.input + svg + label + .input { width: 63px; }
.select { height: 23px; border: 1px solid #ccc; border-radius: 3px; background: #fafafa; color: #000; padding: 0 5px 0 7px; line-height: 21px; display: flex; justify-content: space-between; align-items: center; letter-spacing: -.25px; }
.r2 .select:nth-child(2) { width: 107px; }
.select i { border: 3.500px solid transparent; border-top: 7px solid #111; border-bottom: 0; }
.actions { display: flex; gap: 2px; padding: 0 0 0 240px; margin-top: -1px; }
.btn { width: 70px; height: 26px; border: 1px solid #ccc; border-radius: 3px; font: 11px/24px "Liberation Sans", sans-serif; letter-spacing: 0; padding-left: 9px; color: #333; -webkit-text-stroke: .2px; }
.primary { background: #d32f2f; border-color: #b92929; color: #fff; font-weight: 700; font-size: 11px; letter-spacing: -.15px; -webkit-text-stroke: 0; }

/* Save dialog */
.dialog { position: absolute; left: 651px; top: 386px; width: 611px; height: 299px; border: 1px solid #1883d7; background: #fff; box-shadow: 1px 3px 12px #0006; display: flex; flex-direction: column; overflow: hidden; color: #111; letter-spacing: -.3px; }
.d-title { height: 32px; display: flex; align-items: center; padding: 0 10px 2px 8px; letter-spacing: -.38px; }
.i-chrome { width: 15px; height: 15px; margin-right: 6px; margin-top: -2px; }
.d-close { width: 10px; height: 10px; margin-left: auto; margin-top: -2px; }
.d-nav { height: 33px; display: flex; align-items: center; padding: 0 12px 4px 14px; }
.d-nav svg { fill: none; stroke-width: 1.600; }
.ar { width: 12px; height: 10px; margin-right: 17px; }
.tiny { width: 6px; height: 4px; color: #ccc; margin: 0 12px 0 -2px; }
.up { width: 12px; height: 12px; margin-right: 7px; margin-left: -1px; }
.address { width: 277px; height: 22px; border: 1px solid #d9d9d9; display: flex; align-items: center; padding-left: 4px; letter-spacing: -.5px; }
.address span { line-height: 17px; margin-top: -2px; }
.folder { width: 13px; height: 16px; }
.laq { width: 8px; height: 5px; margin: 2px 8px 0 6px; stroke: #555; stroke-width: 1 !important; }
.raq { width: 4px; height: 6px; margin: 0 10px 0 9px; stroke: #555; stroke-width: 1.200 !important; }
.chev { width: 10px; height: 6px; color: #555; margin-left: auto; margin-right: 4px; }
.refresh { width: 20px; height: 20px; border-left: 1px solid #d9d9d9; padding: 4px; }
.refresh svg { width: 12px; height: 12px; }
.search { width: 202px; height: 22px; border: 1px solid #d9d9d9; margin-left: 12px; display: flex; align-items: center; justify-content: space-between; padding: 0 7px 0 8px; color: #737373; letter-spacing: -.52px; }
.search svg { width: 12px; height: 12px; }
.d-tools { height: 31px; background: #f5f6f7; border-bottom: 1px solid #e5e5e5; display: flex; align-items: center; padding: 0 15px 1px 18px; color: #1e3a5c; letter-spacing: -.4px; }
.tri { border: 4px solid transparent; border-top: 4px solid #17395e; border-bottom: 0; margin-left: 5px; }
.new { margin-left: 31px; }
.views { width: 16px; height: 13px; margin-left: auto; }
.views + .tri { margin-left: 9px; }
.d-help { width: 16px; height: 16px; margin-left: 30px; border-radius: 50%; background: #0067c8; outline: 1px solid #004d9b; outline-offset: -1px; color: #fff; font-size: 12px; line-height: 16px; text-align: center; }
.d-body { height: 84px; display: flex; }
.tree { width: 139px; overflow: hidden; padding-top: 8px; letter-spacing: -.4px; }
.tree div { display: flex; align-items: center; height: 24px; padding-left: 24px; }
.tree .sel { background: #d9d9d9; margin: 8px 0; }
.t16 { width: 16px; height: 10px; margin-right: 5px; }
.t16.pc { height: 15px; }
.net .t16 { height: 12px; }
.vscroll { width: 16px; margin-left: 1px; background: #f0f0f0; display: flex; flex-direction: column; align-items: center; color: #444; padding: 6px 0 5px; }
.vscroll svg { width: 8px; height: 6px; }
.vscroll i { width: 16px; height: 17px; margin: auto 0 9px; background: #cdcdcd; }
.flip { transform: rotate(180deg); }
.files { flex: 1; margin-left: 3px; min-width: 0; overflow: hidden; position: relative; }
.sort { position: absolute; left: 138px; top: 0; width: 9px; height: 5px; color: #777; transform: rotate(180deg); }
.f-head { height: 25px; display: grid; grid-template-columns: 273px 120px 60px; color: #44618a; letter-spacing: -.22px; }
.f-head span { line-height: 26px; padding-left: 6px; border-right: 1px solid #e5e5e5; }
.f-head span:first-child { padding-left: 18px; }
.f-head span:last-child { border: 0; }
.f-row { height: 43px; display: grid; grid-template-columns: 17px 242px 120px 60px; padding: 0 0 9px 19px; align-items: center; color: #6d6d6d; letter-spacing: -.52px; }
.f-row svg { width: 17px; height: 17px; }
.f-row span { padding-left: 1px; }
.f-row span:nth-child(2) { color: #000; padding-left: 3px; letter-spacing: -.33px; }
.f-row span:last-child { letter-spacing: -.3px; }
.hscroll { height: 16px; background: #f0f0f0; display: flex; align-items: center; color: #444; padding: 0 4px; }
.hscroll svg { width: 9px; height: 6px; }
.hscroll i { width: 310px; height: 15px; background: #cdcdcd; margin-left: 5px; }
.left { transform: rotate(90deg); }
.right { transform: rotate(-90deg); margin-left: auto; }
.d-fields { flex: none; height: 62px; background: #f0f0f0; padding: 11px 5px 0 0; display: grid; grid-template-columns: 120px 479px; column-gap: 5px; row-gap: 2px; align-content: start; text-align: right; line-height: 23px; letter-spacing: -.32px; }
.combo { height: 23px; border: 1px solid #adadad; background: #e1e1e1; display: flex; align-items: center; justify-content: space-between; padding: 0 4px 0 3px; }
.combo.focus { border-color: #0078d7; background: #fff; padding-left: 5px; }
.combo mark { background: #0078d7; color: #fff; line-height: 15px; margin-top: -2px; letter-spacing: -.3px; }
.combo svg { width: 9px; height: 6px; color: #555; }
.combo + label + .combo { letter-spacing: -.36px; }
.d-foot { flex: 1; background: #f0f0f0; display: flex; align-items: center; padding: 11px 18px 0 13px; }
.d-foot .flip { width: 9px; height: 6px; margin-right: 8px; color: #444; }
.d-foot span { flex: 1; letter-spacing: -.4px; }
.d-foot b { width: 86px; height: 24px; font-weight: 400; border: 1px solid #adadad; background: #e1e1e1; text-align: center; line-height: 22px; margin: -6px 0 0 14px; }
.d-foot .save { border: 2px solid #0078d7; line-height: 20px; }
.grip { position: absolute; right: 3px; bottom: 2px; width: 8px; height: 8px; }

/* Windows taskbar */
.taskbar { flex: none; height: 40px; background: #2e3034; display: flex; justify-content: space-between; color: #fff; }
.apps { display: flex; }
.app { width: 49px; height: 40px; padding: 8px 12px 0 13px; }
.app.sys { width: 48px; padding: 12px 16px; }
.app.sys + .app:not(.sys) { width: 51px; padding-left: 15px; }
.app svg { width: 24px; height: 24px; }
.app .s16 { width: 16px; height: 16px; }
.app.current { background: #5b5d60; width: 48px; border-bottom: 2px solid #76b9ed; margin-left: 1px; padding-left: 12px; }
.app.open { background: linear-gradient(#76b9ed, #76b9ed) 5px bottom / 40px 2px no-repeat; }
.app.group { background: linear-gradient(90deg, #76b9ed 32px, #4f86b3 32px) 5px bottom / 40px 2px no-repeat; }
.tray { width: 360px; display: flex; align-items: center; font-size: 11px; letter-spacing: -.35px; }
.tray > svg { fill: none; stroke: #fff; stroke-width: 1.200; }
.tray .t-alert { width: 28px; height: 28px; margin-left: 2px; margin-top: -4px; stroke: none; }
.tray .t-people { width: 16px; height: 16px; margin-left: 19px; }
.tray .t-up { width: 12px; height: 7px; margin-left: 22px; }
.tray .t-cloud { width: 17px; height: 12px; margin-left: 9px; stroke: none; }
.tray .t-bat { width: 16px; height: 14px; margin-left: 7px; }
.tray .t-net { width: 16px; height: 14px; margin-left: 8px; }
.tray .t-vol { width: 18px; height: 14px; margin-left: 7px; }
.lang { margin-left: 12px; width: 27px; }
.clock { display: flex; flex-direction: column; align-items: center; line-height: 18px; width: 72px; margin-top: -1px; letter-spacing: 0; }
.clock span:first-child { letter-spacing: -.2px; }
.notice { position: relative; margin-left: 11px; }
.notice svg { width: 16px; height: 16px; margin-top: -1px; }
.notice b { position: absolute; left: 7px; top: 6px; width: 17px; height: 17px; border-radius: 50%; background: #4b4c50; font-size: 10px; line-height: 17px; text-align: center; }
```
